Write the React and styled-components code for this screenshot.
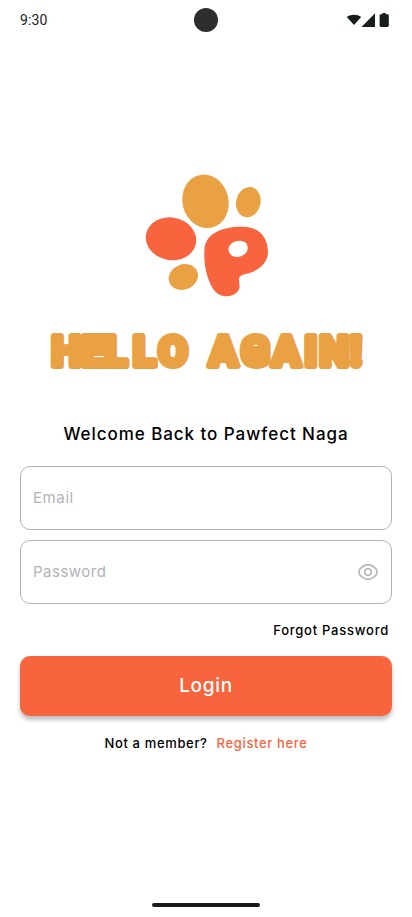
import React from "react";
import styled, { createGlobalStyle } from "styled-components";

const Global = createGlobalStyle`
  * { box-sizing: border-box; }
  body { margin: 0; background: #fff; font-family: Inter, "Liberation Sans", sans-serif; }
  h1, h2, p { margin: 0; }
`;

const Screen = styled.main`
  width: 412px;
  height: 917px;
  overflow: hidden;
  display: flex;
  flex-direction: column;
  align-items: center;
  background: #fff;
`;

const StatusBar = styled.header`
  width: 100%;
  height: 40px;
  padding: 0 20px;
  display: grid;
  grid-template-columns: 1fr 24px 1fr;
  align-items: center;
`;

const Clock = styled.span`
  font: 400 14px/20px Roboto, sans-serif;
  letter-spacing: 0.14px;
  color: #171d1b;
`;

const Camera = styled.span`
  width: 24px;
  height: 24px;
  border-radius: 50%;
  background: #2e2e2e;
`;

const StatusIcons = styled.svg`
  justify-self: end;
  width: 46px;
  height: 16px;
  fill: #171d1b;
`;

const Logo = styled.svg`
  width: 140px;
  height: 140px;
  margin-top: 125px;
`;

const Title = styled.h1`
  width: 412px;
  height: 60px;
  margin-top: 15px;
`;

const Lettering = styled.svg`
  display: block;
  width: 100%;
  height: 100%;
  fill: #eaa143;
  stroke: #eaa143;
  stroke-width: 6px;
  stroke-linejoin: round;
  font: 900 42px Roboto, sans-serif;
`;

const Welcome = styled.h2`
  margin-top: 42px;
  font-size: 17px;
  line-height: 24px;
  font-weight: 500;
  letter-spacing: 0.95px;
  color: #000;
  white-space: nowrap;
`;

const Form = styled.form`
  width: 372px;
  margin-top: 20px;
  display: flex;
  flex-direction: column;
  gap: 10px;
`;

const Field = styled.label`
  height: 64px;
  padding: 0 12px;
  display: flex;
  align-items: center;
  justify-content: space-between;
  border: 1px solid #b3b3b6;
  border-radius: 10px;
`;

const Placeholder = styled.span`
  font-size: 15px;
  line-height: 20px;
  letter-spacing: ${(p) => p.$spacing};
  color: #b3b3b8;
`;

const Eye = styled.svg`
  width: 22px;
  height: 20px;
  fill: none;
  stroke: #b3b3b8;
  stroke-width: 1.6;
`;

const Forgot = styled.a`
  align-self: flex-end;
  margin: 6px 3px 0 0;
  font-size: 13px;
  line-height: 20px;
  font-weight: 500;
  letter-spacing: 0.75px;
  color: #000;
`;

const LoginButton = styled.button`
  height: 60px;
  margin-top: 6px;
  border: 0;
  border-radius: 10px;
  background: #f8643d;
  box-shadow: 0 4px 4px rgba(0, 0, 0, 0.25);
  color: #fff;
  font: 500 19px/24px Inter, sans-serif;
  letter-spacing: 0.7px;
`;

const Register = styled.p`
  margin-top: 17px;
  display: flex;
  gap: 9px;
  font-size: 13px;
  line-height: 20px;
  font-weight: 500;
  letter-spacing: 0.65px;
`;

const RegisterLink = styled.a`
  color: #f8643d;
`;

const HomeBar = styled.div`
  width: 108px;
  height: 4px;
  margin: auto 0 10px;
  border-radius: 2px;
  background: #171d1b;
`;

export default function App() {
  return (
    <Screen>
      <Global />
      <StatusBar>
        <Clock>9:30</Clock>
        <Camera />
        <StatusIcons viewBox="346 12 46 16">
          <path d="M346.8 17.1C350.8 13.9 357.2 13.9 361.2 17.1L354 25Z" />
          <path d="M375 13.3V27H361.5Z" />
          <path d="M382.3 13H385.7V14.2H387.4Q388.8 14.2 388.8 15.6V25.6Q388.8 27 387.4 27H381Q379.6 27 379.6 25.6V15.6Q379.6 14.2 381 14.2H382.3Z" />
        </StatusIcons>
      </StatusBar>
      <Logo viewBox="0 0 420 420" aria-label="Pawfect Naga">
        <g fill="#eaa143">
          <ellipse cx="208.500" cy="109" rx="69" ry="81" transform="rotate(-14 208.500 109)" />
          <ellipse cx="337" cy="111.500" rx="36.500" ry="46" transform="rotate(14 337 111.500)" />
          <ellipse cx="142" cy="336" rx="45" ry="37.500" transform="rotate(-23 142 336)" />
        </g>
        <g fill="#f8643d">
          <ellipse cx="105" cy="221.500" rx="76" ry="64" transform="rotate(11 105 221.500)" />
          <path
            fillRule="evenodd"
            d="M205 258C206 208 252 185 319 185C370 185 396 216 396 264C394 298 363 319 332 326C318 329 309 333 309 343C309 352 313 364 309 373C302 389 284 394 268 394C244 393 230 374 221 352C208 320 204 293 205 258ZM278 256C281 276 301 279 317 273C334 266 339 251 333 239C327 226 309 225 294 231C282 236 276 245 278 256Z"
          />
        </g>
      </Logo>
      <Title>
        <Lettering viewBox="0 320 412 60" role="img" aria-label="HELLO AGAIN!">
          <text y="366" x="51.500 81.700 104.500 133 158.500 190 209 241 272 304.500 319.500 350">HELLO AGAIN!</text>
        </Lettering>
      </Title>
      <Welcome>Welcome Back to Pawfect Naga</Welcome>
      <Form>
        <Field>
          <Placeholder $spacing="0.6px">Email</Placeholder>
        </Field>
        <Field>
          <Placeholder $spacing="0.5px">Password</Placeholder>
          <Eye viewBox="0 0 22 20">
            <path d="M1.800 10C1.800 7.500 6 2.600 11 2.600S20.200 7.500 20.200 10S16 17.400 11 17.400S1.800 12.500 1.800 10Z" />
            <circle cx="11" cy="10" r="3.300" />
          </Eye>
        </Field>
        <Forgot>Forgot Password</Forgot>
        <LoginButton type="button">Login</LoginButton>
      </Form>
      <Register>
        <span>Not a member?</span>
        <RegisterLink>Register here</RegisterLink>
      </Register>
      <HomeBar />
    </Screen>
  );
}
